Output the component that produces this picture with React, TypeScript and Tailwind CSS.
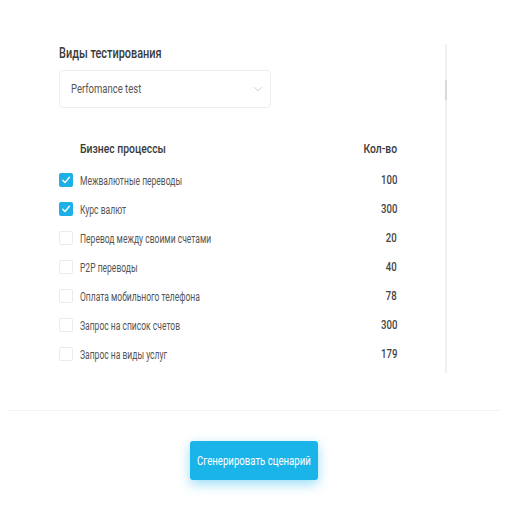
import React from "react";

const rows = [
  { label: "Межвалютные переводы", count: 100, checked: true },
  { label: "Курс валют", count: 300, checked: true },
  { label: "Перевод между своими счетами", count: 20, checked: false },
  { label: "P2P переводы", count: 40, checked: false },
  { label: "Оплата мобильного телефона", count: 78, checked: false },
  { label: "Запрос на список счетов", count: 300, checked: false },
  { label: "Запрос на виды услуг", count: 179, checked: false },
];

function Check({ checked }: { checked: boolean }) {
  if (checked) {
    return (
      <div className="w-[14px] h-[14px] rounded-[2px] bg-[#1cb0e6] flex items-center justify-center shrink-0">
        <svg width="10" height="10" viewBox="0 0 10 10" fill="none">
          <path d="M1.8 5.2 L4 7.6 L8.4 2.2" stroke="white" strokeWidth="1.4" strokeLinecap="round" strokeLinejoin="round" />
        </svg>
      </div>
    );
  }
  return <div className="w-[14px] h-[14px] rounded-[2px] border border-[#ebebeb] bg-white shrink-0" />;
}

export default function App() {
  return (
    <div className="w-[508px] h-[508px] bg-white font-['Roboto',sans-serif] overflow-hidden">
      <div className="flex pt-[44px] h-[373px]">
        <div className="w-[445px] pl-[59px] pr-[48px]">
          <div className="h-[18px] flex items-center">
            <span className="inline-block origin-left scale-x-[0.78] whitespace-nowrap text-[14px] font-medium text-[#3a3a3a]">Виды тестирования</span>
          </div>
          <div className="mt-[8px] w-[212px] h-[38px] border border-[#eeeeee] rounded-[4px] flex items-center justify-between pl-[11px] pr-[7px]">
            <span className="inline-block origin-left scale-x-[0.76] whitespace-nowrap text-[12.5px] text-[#555]">Perfomance test</span>
            <svg width="10" height="6" viewBox="0 0 10 6" fill="none">
              <path d="M1 1 L5 5 L9 1" stroke="#d6d6d6" strokeWidth="1" />
            </svg>
          </div>
          <div className="mt-[32px] h-[18px] flex items-center justify-between pl-[21px]">
            <span className="inline-block origin-left scale-x-[0.8] whitespace-nowrap text-[13px] font-medium text-[#3a3a3a]">Бизнес процессы</span>
            <span className="inline-block origin-right scale-x-[0.8] whitespace-nowrap text-[13px] font-medium text-[#3a3a3a]">Кол-во</span>
          </div>
          <div className="mt-[7px] flex flex-col">
            {rows.map((r) => (
              <div key={r.label} className="h-[29px] flex items-center">
                <Check checked={r.checked} />
                <div className="ml-[7px] flex-1">
                  <span className="inline-block origin-left scale-x-[0.71] whitespace-nowrap text-[12px] text-[#555]">{r.label}</span>
                </div>
                <span className="inline-block origin-right scale-x-[0.8] whitespace-nowrap text-[12px] font-medium text-[#444]">{r.count}</span>
              </div>
            ))}
          </div>
        </div>
        <div className="w-[2px] bg-[#f1f1f1] flex flex-col">
          <div className="mt-[36px] h-[20px] bg-[#d9d9d9]" />
        </div>
      </div>
      <div className="mt-[37px] mx-[8px] h-px bg-[#f4f4f4]" />
      <div className="mt-[30px] flex justify-center">
        <button className="w-[128px] h-[39px] rounded-[3px] bg-[#1bb4e9] text-white shadow-[0_4px_12px_rgba(27,180,233,0.45)] flex items-center justify-center">
          <span className="inline-block origin-center scale-x-[0.74] whitespace-nowrap text-[13px]">Сгенерировать сценарий</span>
        </button>
      </div>
    </div>
  );
}
